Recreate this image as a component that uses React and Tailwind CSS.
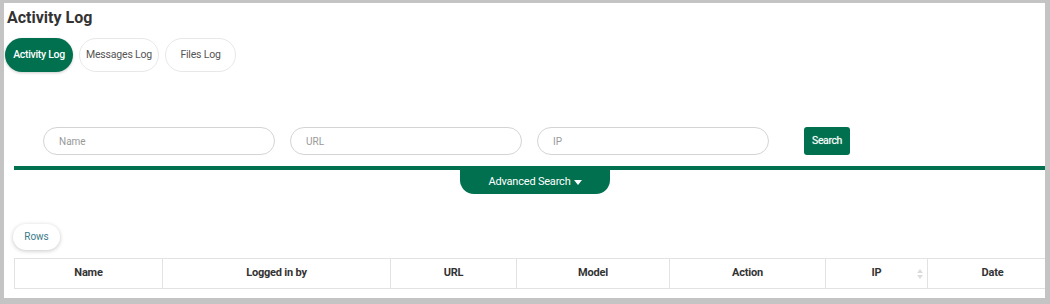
import React from "react";

const tabs = [
  { label: "Activity Log", w: 68 },
  { label: "Messages Log", w: 80 },
  { label: "Files Log", w: 71 },
];
const fields = ["Name", "URL", "IP"];
const columns = [
  { label: "Name", w: "w-[148px]" },
  { label: "Logged in by", w: "w-[228px]" },
  { label: "URL", w: "w-[126px]" },
  { label: "Model", w: "w-[153px]" },
  { label: "Action", w: "w-[156px]" },
  { label: "IP", w: "w-[102px]", sort: true },
  { label: "Date", w: "w-[130px]" },
];

const App = () => {
  return (
    <div
      className="bg-[#c4c4c4] pt-[3px] pl-[4px] pr-[5px] pb-[6px] w-[1050px] h-[304px]"
      style={{ fontFamily: "Roboto, 'Liberation Sans', sans-serif" }}
    >
      <div className="bg-white h-[295px] overflow-hidden relative">
        <h1 className="text-[16px] font-bold text-[#333] leading-[19px] pl-[3px] pt-[5px]">
          Activity Log
        </h1>

        <div className="flex gap-[6px] pl-[1px] mt-[11px]">
          {tabs.map((t, i) => (
            <button
              key={t.label}
              className={
                i === 0
                  ? "h-[34px] rounded-full bg-[#00704f] text-white text-[10.5px] font-medium shadow-[0_1px_3px_rgba(0,0,0,0.2)] tracking-[-0.3px]"
                  : "h-[34px] rounded-full border border-[#e8e8e8] text-[#555] text-[10.5px] tracking-[-0.2px]"
              }
              style={{ width: t.w }}
            >
              {t.label}
            </button>
          ))}
        </div>

        <div className="flex items-center mt-[55px] pl-[39px]">
          {fields.map((f) => (
            <div
              key={f}
              className="w-[232px] h-[28px] mr-[15px] rounded-full border border-[#d4d4d4] flex items-center pl-[15px] text-[10px] text-[#999]"
            >
              {f}
            </div>
          ))}
          <button className="ml-[20px] w-[46px] h-[28px] rounded-[3px] bg-[#00704f] text-white text-[10.5px] tracking-[-0.4px] [text-shadow:0_0_1px_rgba(255,255,255,0.6)]">
            Search
          </button>
        </div>

        <div className="ml-[10px] mt-[11px] h-[4px] bg-[#00704f]" />
        <div className="ml-[456px] w-[150px] h-[24px] rounded-b-[14px] bg-[#00704f] text-white text-[11px] flex items-center justify-center gap-[3px] tracking-[-0.2px]">
          Advanced Search
          <svg width="8" height="5" viewBox="0 0 8 5">
            <path d="M0 0h8L4 5z" fill="white" />
          </svg>
        </div>

        <div className="pl-[9px] mt-[29px]">
          <button className="w-[47px] h-[26px] rounded-full bg-white text-[#3a7a8a] text-[10px] shadow-[0_1px_4px_rgba(0,0,0,0.22)]">
            Rows
          </button>
        </div>

        <div className="ml-[10px] mt-[8px] w-[1050px] border-l border-t border-[#e2e2e2]">
          <div className="flex h-[30px] border-b border-[#e2e2e2]">
            {columns.map((c) => (
              <div
                key={c.label}
                className={`${c.w} shrink-0 border-r border-[#e2e2e2] flex items-center justify-center relative text-[11px] font-bold text-[#333] tracking-[-0.2px]`}
              >
                {c.label}
                {c.sort && (
                  <svg
                    className="absolute right-[4px] top-[10px]"
                    width="6"
                    height="10"
                    viewBox="0 0 6 10"
                  >
                    <path d="M3 0L6 4H0z" fill="#dcdcdc" />
                    <path d="M3 10L0 6H6z" fill="#dcdcdc" />
                  </svg>
                )}
              </div>
            ))}
          </div>
        </div>
      </div>
    </div>
  );
};

export default App;
